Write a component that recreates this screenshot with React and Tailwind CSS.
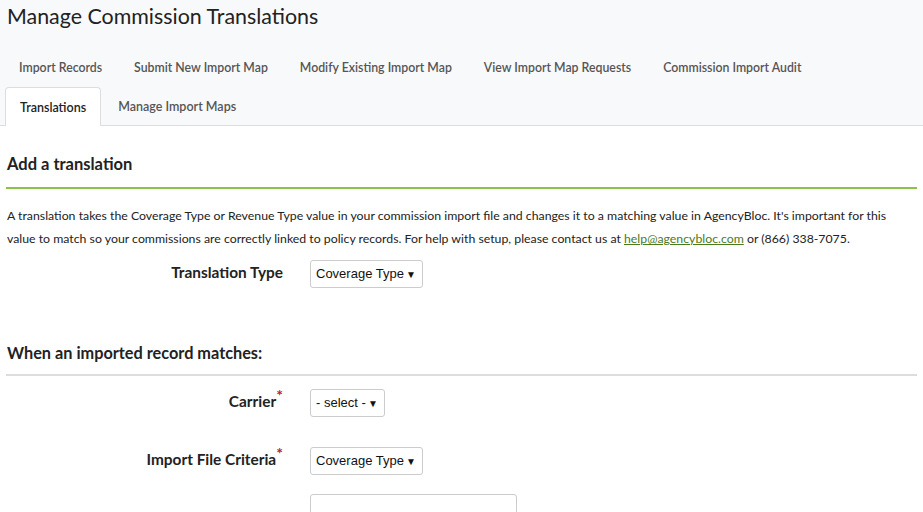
import React from 'react';

const topTabs = ['Import Records', 'Submit New Import Map', 'Modify Existing Import Map', 'View Import Map Requests', 'Commission Import Audit'];

const Select = ({ value, width }) => (
    <div className={`flex items-center justify-between whitespace-nowrap h-[28px] border border-[#cccccc] rounded-[3px] bg-white pl-[5px] pr-[6px] ${width}`}>
        <span className="shrink-0 text-[13px] text-[#111] font-['Liberation_Sans',Arial,sans-serif]">{value}</span>
        <span className="shrink-0 text-[10px] text-[#111] leading-none">▼</span>
    </div>
);

const Field = ({ label, required, children }) => (
    <div className="flex items-center">
        <div className="w-[277px] shrink-0 text-right whitespace-nowrap pb-[3px]">
            <span className="text-[15.4px] font-bold text-[#222]">{label}</span>
            {required && <span className="text-[#b3262d] text-[16px] font-bold relative top-[-6px] leading-none">*</span>}
        </div>
        <div className="pl-[27px]">{children}</div>
    </div>
);

export default function App() {
    return (
        <div className="w-[923px] h-[512px] overflow-hidden bg-white font-['Lato','Noto_Sans',sans-serif] text-[#222]">
            <div className="bg-[#f8f9fb] border-b border-[#dddddd]">
                <h1 className="text-[21.4px] text-[#222] leading-none px-[7px] pt-[6px] h-[49px]">Manage Commission Translations</h1>
                <div className="flex px-[5px] h-[38px] items-center">
                    {topTabs.map((t) => (
                        <div key={t} className="px-[14px] mr-[4px] text-[12.3px] font-semibold text-[#555] whitespace-nowrap">{t}</div>
                    ))}
                </div>
                <div className="flex px-[5px] h-[38px]">
                    <div className="flex items-center px-[14px] bg-white border border-b-0 border-[#dddddd] rounded-t-[4px] text-[12.5px] font-semibold text-[#222] mb-[-1px] h-[39px] pt-[2px]">Translations</div>
                    <div className="flex items-center px-[17px] text-[12.5px] font-semibold text-[#555] pt-[2px]">Manage Import Maps</div>
                </div>
            </div>

            <div className="px-[6px]">
                <h2 className="text-[16.5px] font-bold text-[#222] pt-[28px] pb-[13px] px-[1px] border-b-2 border-[#8bc34a] leading-[20px] w-[911px]">Add a translation</h2>
                <p className="text-[12.3px] leading-[23px] text-[#222] pt-[15px] px-[1px] w-[911px]">
                    A translation takes the Coverage Type or Revenue Type value in your commission import file and changes it to a matching value in AgencyBloc. It's important for this value to match so your commissions are correctly linked to policy records. For help with setup, please contact us at <a className="text-[#4b7a1d] underline">help@agencybloc.com</a> or (866) 338-7075.
                </p>
                <div className="pt-[10px]">
                    <Field label="Translation Type">
                        <Select value="Coverage Type" width="w-[113px]" />
                    </Field>
                </div>

                <h2 className="text-[16.3px] font-bold text-[#222] pt-[55px] pb-[11px] px-[1px] border-b-2 border-[#dddddd] leading-[20px] w-[911px]">When an imported record matches:</h2>

                <div className="pt-[13px]">
                    <Field label="Carrier" required>
                        <Select value="- select -" width="w-[75px]" />
                    </Field>
                    <div className="mt-[30px]">
                        <Field label="Import File Criteria" required>
                            <Select value="Coverage Type" width="w-[113px]" />
                        </Field>
                    </div>
                    <div className="mt-[19px]">
                        <Field label="">
                            <div className="w-[207px] h-[30px] border border-[#cccccc] rounded-[3px] bg-white"></div>
                        </Field>
                    </div>
                </div>
            </div>
        </div>
    );
}
